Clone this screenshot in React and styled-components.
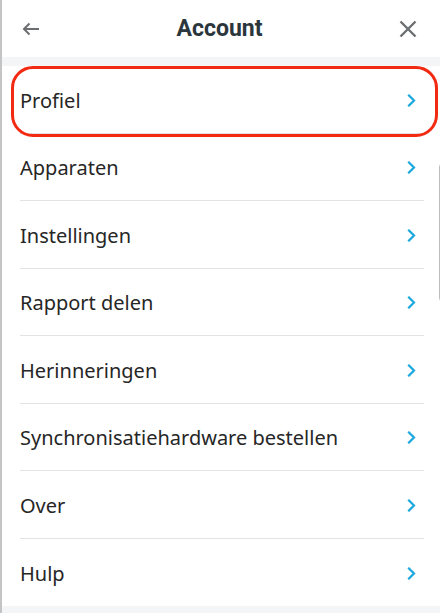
import React from "react";
import styled, { createGlobalStyle } from "styled-components";

const Global = createGlobalStyle`
  html, body { margin: 0; padding: 0; background: #ffffff; }
  body { width: 440px; height: 613px; overflow: hidden; }
`;

const Screen = styled.div`
  position: relative;
  width: 440px;
  height: 613px;
  background: #f4f5f7;
  box-sizing: border-box;
  border-left: 2px solid #c4c4c4;
  display: flex;
  flex-direction: column;
  overflow: hidden;
`;

const Header = styled.header`
  height: 57px;
  flex: none;
  background: #fff;
  display: flex;
  align-items: center;
  justify-content: space-between;
  padding: 0 22px 0 19px;
`;

const Title = styled.h1`
  margin: 0;
  font-family: Roboto, "Liberation Sans", Arial, sans-serif;
  font-weight: 700;
  font-size: 23px;
  color: #2b363c;
`;

const IconBtn = styled.div`
  width: 20px;
  height: 20px;
  display: flex;
  align-items: center;
  justify-content: center;
  color: #6b6f72;
`;

const List = styled.ul`
  list-style: none;
  margin: 9px 0 0;
  padding: 0;
  background: #fff;
  height: 540px;
  flex: none;
`;

const Row = styled.li`
  height: 67.5px;
  box-sizing: border-box;
  margin: 0 16px 0 18px;
  display: flex;
  align-items: center;
  justify-content: space-between;
  border-bottom: ${(p) => (p.$last ? "none" : "1.5px solid #e3e3e3")};
  font-family: "Noto Sans", "Open Sans", sans-serif;
  font-size: 20px;
  color: #262626;
  padding-right: 8px;
  padding-top: 2px;
`;

const Highlight = styled.div`
  position: absolute;
  left: 9px;
  top: 66px;
  width: 427px;
  height: 71px;
  box-sizing: border-box;
  border: 3.5px solid #f22a12;
  border-radius: 22px;
  pointer-events: none;
`;

const ScrollHint = styled.div`
  position: absolute;
  left: 437px;
  top: 163px;
  width: 12px;
  height: 139px;
  box-sizing: border-box;
  border: 1px solid #bdbdbd;
  border-radius: 4px;
`;

const Chevron = () => (
  <svg width="9" height="13" viewBox="0 0 9 13">
    <path d="M2 1.5 L7 6.5 L2 11.5" fill="none" stroke="#1ba8df" strokeWidth="2.2" strokeLinecap="square" />
  </svg>
);

const items = [
  "Profiel",
  "Apparaten",
  "Instellingen",
  "Rapport delen",
  "Herinneringen",
  "Synchronisatiehardware bestellen",
  "Over",
  "Hulp",
];

export default function App() {
  return (
    <>
      <Global />
      <Screen>
        <Header>
          <IconBtn>
            <svg width="18" height="14" viewBox="0 0 18 14">
              <path d="M17 7 H2 M7.5 1.5 L2 7 L7.5 12.5" fill="none" stroke="#6b6f72" strokeWidth="2" />
            </svg>
          </IconBtn>
          <Title>Account</Title>
          <IconBtn>
            <svg width="18" height="18" viewBox="0 0 18 18">
              <path d="M1.5 1.5 L16.5 16.5 M16.5 1.5 L1.5 16.5" fill="none" stroke="#6b6f72" strokeWidth="2.4" />
            </svg>
          </IconBtn>
        </Header>
        <List>
          {items.map((t, i) => (
            <Row key={t} $last={i === items.length - 1}>
              <span>{t}</span>
              <Chevron />
            </Row>
          ))}
        </List>
        <Highlight />
        <ScrollHint />
      </Screen>
    </>
  );
}
